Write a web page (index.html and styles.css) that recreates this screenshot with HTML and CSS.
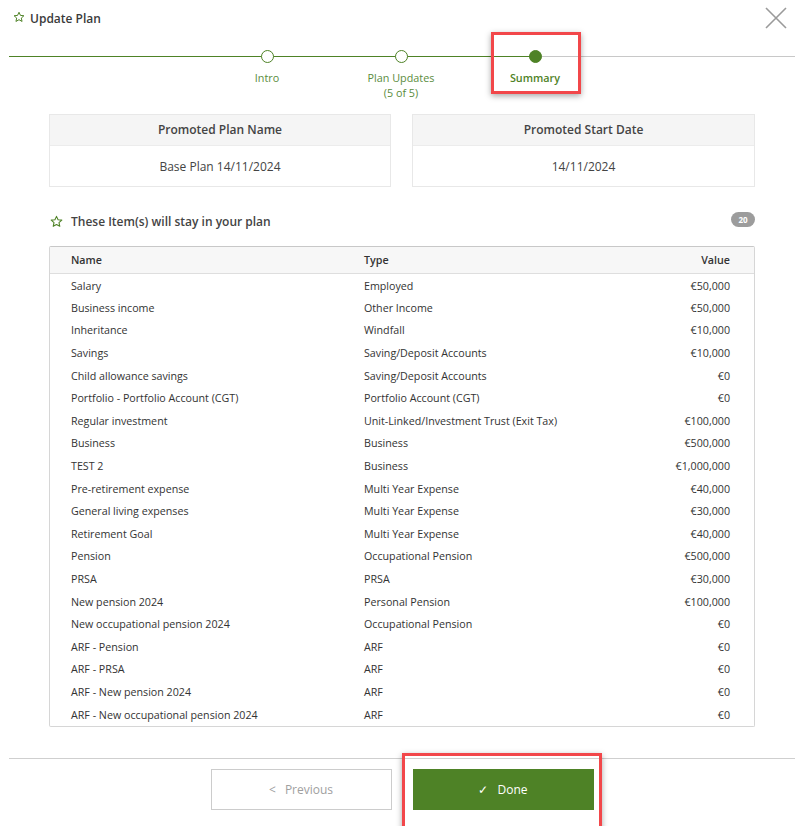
FILE: index.html
```html
<!DOCTYPE html>
<html>
<head>
<meta charset="utf-8">
<link rel="stylesheet" href="styles.css">
</head>
<body>
<div class="modal">
  <div class="header">
    <div class="title">
      <svg class="star" width="12" height="12" viewBox="0 0 24 24"><path d="M12 2.5l2.9 6.3 6.9.7-5.2 4.6 1.5 6.8L12 17.4l-6.1 3.5 1.5-6.8-5.2-4.6 6.9-.7z" fill="none" stroke="#4e8226" stroke-width="2" stroke-linejoin="round"/></svg>
      <span>Update Plan</span>
    </div>
    <svg class="close" width="22" height="22" viewBox="0 0 22 22"><path d="M1 1L21 21M21 1L1 21" stroke="#9a9a9a" stroke-width="1.6"/></svg>
  </div>

  <div class="stepper">
    <div class="track"><div class="done-seg"></div><div class="todo-seg"></div></div>
    <div class="steps">
      <div class="step"><div class="dot"></div><div class="label">Intro</div></div>
      <div class="step"><div class="dot"></div><div class="label">Plan Updates<br>(5 of 5)</div></div>
      <div class="step active"><div class="dot"></div><div class="label">Summary</div></div>
    </div>
    <div class="highlight hl-summary"></div>
  </div>

  <div class="cards">
    <div class="card"><div class="card-head">Promoted Plan Name</div><div class="card-body">Base Plan 14/11/2024</div></div>
    <div class="card"><div class="card-head">Promoted Start Date</div><div class="card-body">14/11/2024</div></div>
  </div>

  <div class="section-head">
    <div class="section-title">
      <svg class="star" width="13" height="13" viewBox="0 0 24 24"><path d="M12 2.5l2.9 6.3 6.9.7-5.2 4.6 1.5 6.8L12 17.4l-6.1 3.5 1.5-6.8-5.2-4.6 6.9-.7z" fill="none" stroke="#4e8226" stroke-width="2" stroke-linejoin="round"/></svg>
      <span>These Item(s) will stay in your plan</span>
    </div>
    <div class="badge">20</div>
  </div>

  <div class="table">
    <div class="row head"><div>Name</div><div>Type</div><div class="val">Value</div></div>
    <div class="row"><div>Salary</div><div>Employed</div><div class="val">€50,000</div></div>
    <div class="row"><div>Business income</div><div>Other Income</div><div class="val">€50,000</div></div>
    <div class="row"><div>Inheritance</div><div>Windfall</div><div class="val">€10,000</div></div>
    <div class="row"><div>Savings</div><div>Saving/Deposit Accounts</div><div class="val">€10,000</div></div>
    <div class="row"><div>Child allowance savings</div><div>Saving/Deposit Accounts</div><div class="val">€0</div></div>
    <div class="row"><div>Portfolio - Portfolio Account (CGT)</div><div>Portfolio Account (CGT)</div><div class="val">€0</div></div>
    <div class="row"><div>Regular investment</div><div>Unit-Linked/Investment Trust (Exit Tax)</div><div class="val">€100,000</div></div>
    <div class="row"><div>Business</div><div>Business</div><div class="val">€500,000</div></div>
    <div class="row"><div>TEST 2</div><div>Business</div><div class="val">€1,000,000</div></div>
    <div class="row"><div>Pre-retirement expense</div><div>Multi Year Expense</div><div class="val">€40,000</div></div>
    <div class="row"><div>General living expenses</div><div>Multi Year Expense</div><div class="val">€30,000</div></div>
    <div class="row"><div>Retirement Goal</div><div>Multi Year Expense</div><div class="val">€40,000</div></div>
    <div class="row"><div>Pension</div><div>Occupational Pension</div><div class="val">€500,000</div></div>
    <div class="row"><div>PRSA</div><div>PRSA</div><div class="val">€30,000</div></div>
    <div class="row"><div>New pension 2024</div><div>Personal Pension</div><div class="val">€100,000</div></div>
    <div class="row"><div>New occupational pension 2024</div><div>Occupational Pension</div><div class="val">€0</div></div>
    <div class="row"><div>ARF - Pension</div><div>ARF</div><div class="val">€0</div></div>
    <div class="row"><div>ARF - PRSA</div><div>ARF</div><div class="val">€0</div></div>
    <div class="row"><div>ARF - New pension 2024</div><div>ARF</div><div class="val">€0</div></div>
    <div class="row"><div>ARF - New occupational pension 2024</div><div>ARF</div><div class="val">€0</div></div>
  </div>

  <div class="footer">
    <button class="btn prev"><span class="chev">&lt;</span> Previous</button>
    <div class="done-wrap">
      <button class="btn done"><span class="check">✓</span> Done</button>
      <div class="highlight hl-done"></div>
    </div>
  </div>
</div>
</body>
</html>
```

FILE: styles.css
```css
* { box-sizing: border-box; }
html, body { margin: 0; padding: 0; background: #fff; }
body {
  width: 802px;
  height: 826px;
  overflow: hidden;
  font-family: "Open Sans", "Noto Sans", sans-serif;
  color: #333;
}
.modal { position: relative; }

.header {
  height: 36px;
  display: flex;
  justify-content: space-between;
  align-items: flex-start;
  padding-left: 13px;
}
.title {
  display: flex;
  align-items: center;
  gap: 5px;
  height: 36px;
  font-size: 12px;
  font-weight: 600;
  color: #3a3a3a;
}
.title .star { margin-top: -2px; }
.close { margin: 7px 15px 0 0; }

.stepper {
  position: relative;
  margin-top: 14px;
  height: 50px;
}
.track {
  position: absolute;
  left: 9px;
  right: 7px;
  top: 6px;
  height: 1px;
  display: flex;
}
.done-seg { width: 527px; background: #4e8226; }
.todo-seg { flex: 1; background: #c8c8c8; }
.steps {
  position: relative;
  display: flex;
  padding-left: 200px;
}
.step {
  width: 134px;
  display: flex;
  flex-direction: column;
  align-items: center;
}
.dot {
  width: 13px;
  height: 13px;
  border-radius: 50%;
  border: 1.5px solid #4e8226;
  background: #fff;
}
.step.active .dot { background: #4e8226; }
.label {
  margin-top: 7px;
  font-size: 10.8px;
  line-height: 15px;
  color: #5a8c3c;
  text-align: center;
}
.step.active .label { font-weight: 600; color: #4e8226; }

.highlight {
  position: absolute;
  border: 3px solid #f2474a;
  box-shadow: 0 2px 6px rgba(0,0,0,0.35);
  pointer-events: none;
}
.hl-summary { left: 491px; top: -18px; width: 90px; height: 62px; }

.cards {
  display: grid;
  grid-template-columns: 342px 343px;
  gap: 21px;
  padding-left: 49px;
  margin-top: 14px;
}
.card {
  border: 1px solid #e8e8e8;
  height: 73px;
  text-align: center;
  font-size: 12px;
}
.card-head {
  height: 31px;
  line-height: 30px;
  background: #f5f5f5;
  border-bottom: 1px solid #ececec;
  font-weight: 600;
  color: #444;
}
.card-body {
  line-height: 41px;
  color: #444;
}

.section-head {
  display: flex;
  justify-content: space-between;
  align-items: flex-start;
  margin: 25px 47px 0 50px;
  height: 20px;
}
.section-title {
  display: flex;
  align-items: center;
  gap: 8px;
  font-size: 12px;
  font-weight: 600;
  line-height: 20px;
  color: #444;
}
.section-title .star { margin-top: -1px; }
.badge {
  width: 24px;
  height: 15px;
  border-radius: 8px;
  background: #9c9c9c;
  color: #fff;
  font-size: 8px;
  font-weight: 700;
  line-height: 15px;
  text-align: center;
}

.table {
  margin: 14px 47px 0 49px;
  border: 1px solid #d6d6d6;
  border-top-color: #c8c8c8;
  border-radius: 2px;
  height: 481px;
}
.row {
  display: grid;
  grid-template-columns: 293px 1fr auto;
  padding: 0 24px 0 21px;
  height: 22.6px;
  align-items: center;
  font-size: 10.7px;
  color: #333;
}
.row.head {
  height: 27px;
  background: #f7f7f7;
  border-bottom: 1px solid #dedede;
  font-weight: 600;
  color: #333;
}
.row:nth-child(2) { padding-top: 1px; }
.val { text-align: right; }

.footer {
  margin: 31px 7px 0 9px;
  border-top: 1px solid #cfcfcf;
  padding-top: 10px;
  display: flex;
  justify-content: center;
  gap: 21px;
}
.btn {
  width: 181px;
  height: 41px;
  font-family: "Open Sans", "Noto Sans", sans-serif;
  font-size: 12px;
  cursor: pointer;
}
.prev {
  background: #fff;
  border: 1px solid #cccccc;
  color: #a0a0a0;
}
.chev { margin-right: 6px; font-size: 12px; }
.done-wrap { position: relative; }
.done {
  background: #4e8226;
  border: none;
  color: #fff;
}
.check { margin-right: 6px; font-size: 12px; }
.hl-done { left: -11px; top: -16px; width: 200px; height: 80px; }
```
